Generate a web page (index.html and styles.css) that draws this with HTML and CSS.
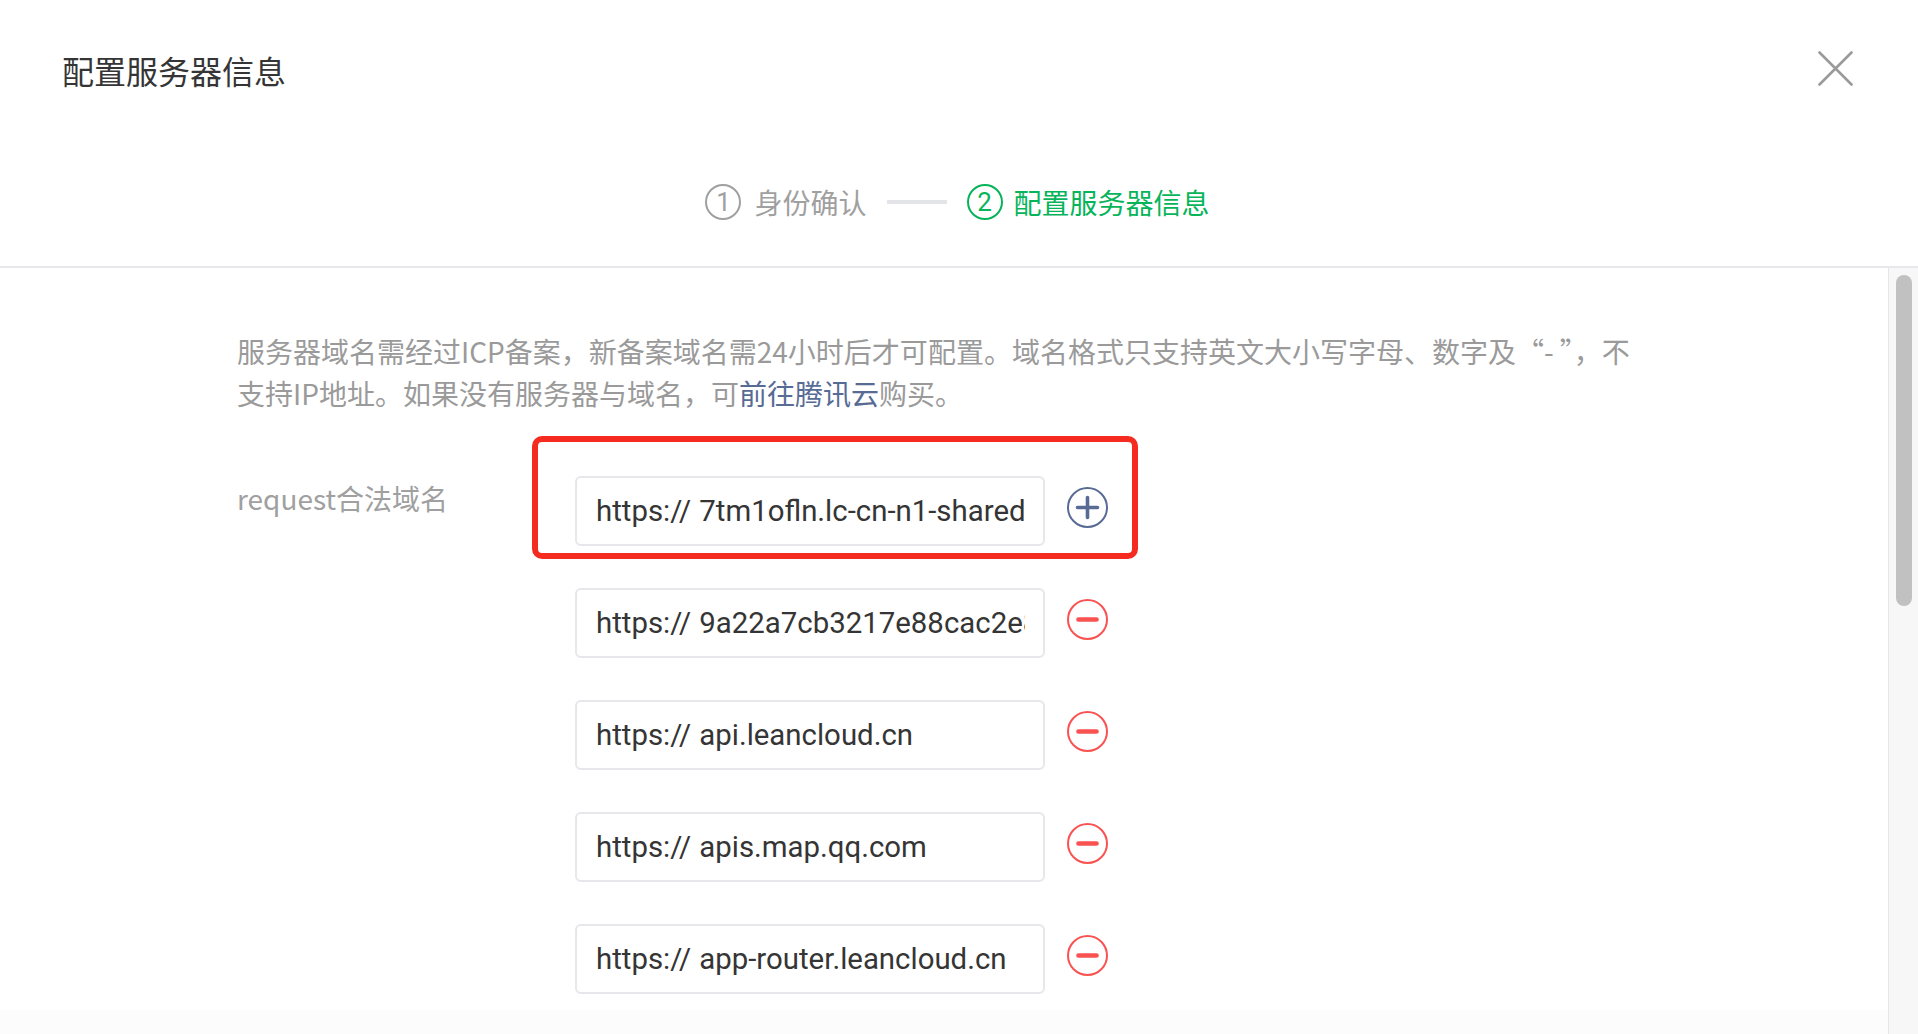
FILE: index.html
```html
<!DOCTYPE html>
<html lang="zh-CN">
<head>
<meta charset="utf-8">
<title>配置服务器信息</title>
<link rel="stylesheet" href="styles.css">
</head>
<body>
<div class="dialog">
  <header class="dialog-head">
    <div class="title-row">
      <h1 class="title">配置服务器信息</h1>
      <button class="close" aria-label="关闭">
        <svg width="35" height="35" viewBox="0 0 35 35"><path d="M1.5 1.5 L33.5 33.5 M33.5 1.5 L1.5 33.5" stroke="#9a9a9a" stroke-width="2.6" stroke-linecap="round" fill="none"/></svg>
      </button>
    </div>
    <div class="steps">
      <div class="step done"><span class="num">1</span><span class="step-text">身份确认</span></div>
      <span class="step-line"></span>
      <div class="step current"><span class="num">2</span><span class="step-text">配置服务器信息</span></div>
    </div>
  </header>
  <div class="dialog-body">
    <div class="content">
      <p class="desc">服务器域名需经过ICP备案，新备案域名需24小时后才可配置。域名格式只支持英文大小写字母、数字及“- ”，不支持IP地址。如果没有服务器与域名，可<a class="link" href="#">前往腾讯云</a>购买。</p>
      <div class="form-row">
        <label class="label">request合法域名</label>
        <div class="fields">
          <div class="field-row first">
            <div class="field"><span class="prefix">https://</span><input class="input" type="text" value="7tm1ofln.lc-cn-n1-shared.com" readonly></div>
            <span class="icon add">
              <svg width="41" height="41" viewBox="0 0 41 41"><circle cx="20.5" cy="20.5" r="19.5" fill="none" stroke="#576b95" stroke-width="2"/><path d="M20.5 10.5 V30.5 M10.5 20.5 H30.5" stroke="#576b95" stroke-width="3.6" stroke-linecap="round"/></svg>
            </span>
            <div class="annot"></div>
          </div>
          <div class="field-row">
            <div class="field"><span class="prefix">https://</span><input class="input" type="text" value="9a22a7cb3217e88cac2e8f0b.lc-cn-n1-shared.com" readonly></div>
            <span class="icon remove">
              <svg width="41" height="41" viewBox="0 0 41 41"><circle cx="20.5" cy="20.5" r="19.5" fill="none" stroke="#fa5151" stroke-width="2"/><path d="M11.5 20.5 H29.5" stroke="#fa5151" stroke-width="4.6" stroke-linecap="round"/></svg>
            </span>
          </div>
          <div class="field-row">
            <div class="field"><span class="prefix">https://</span><input class="input" type="text" value="api.leancloud.cn" readonly></div>
            <span class="icon remove">
              <svg width="41" height="41" viewBox="0 0 41 41"><circle cx="20.5" cy="20.5" r="19.5" fill="none" stroke="#fa5151" stroke-width="2"/><path d="M11.5 20.5 H29.5" stroke="#fa5151" stroke-width="4.6" stroke-linecap="round"/></svg>
            </span>
          </div>
          <div class="field-row">
            <div class="field"><span class="prefix">https://</span><input class="input" type="text" value="apis.map.qq.com" readonly></div>
            <span class="icon remove">
              <svg width="41" height="41" viewBox="0 0 41 41"><circle cx="20.5" cy="20.5" r="19.5" fill="none" stroke="#fa5151" stroke-width="2"/><path d="M11.5 20.5 H29.5" stroke="#fa5151" stroke-width="4.6" stroke-linecap="round"/></svg>
            </span>
          </div>
          <div class="field-row">
            <div class="field"><span class="prefix">https://</span><input class="input" type="text" value="app-router.leancloud.cn" readonly></div>
            <span class="icon remove">
              <svg width="41" height="41" viewBox="0 0 41 41"><circle cx="20.5" cy="20.5" r="19.5" fill="none" stroke="#fa5151" stroke-width="2"/><path d="M11.5 20.5 H29.5" stroke="#fa5151" stroke-width="4.6" stroke-linecap="round"/></svg>
            </span>
          </div>
        </div>
      </div>
    </div>
    <div class="fade"></div>
    <div class="scrollbar"><div class="thumb"></div></div>
  </div>
</div>
</body>
</html>
```

FILE: styles.css
```css
* { box-sizing: border-box; }
html, body { margin: 0; padding: 0; background: #fff; }
body {
  font-family: "Noto Sans CJK SC", "Noto Sans", sans-serif;
  color: #353535;
  overflow: hidden;
}
.dialog {
  width: 1918px;
  height: 1034px;
  display: flex;
  flex-direction: column;
  position: relative;
}
.dialog-head {
  padding: 50px 65px 46px 62px;
  border-bottom: 2px solid #e7e8eb;
  flex: none;
}
.title-row {
  display: flex;
  align-items: center;
  justify-content: space-between;
  height: 40px;
}
.title {
  margin: 0;
  font-size: 32px;
  line-height: 40px;
  font-weight: 400;
  color: #353535;
}
.close {
  border: 0;
  background: none;
  padding: 0;
  width: 35px;
  height: 35px;
  display: block;
  margin-top: -4px;
}
.close svg { display: block; }
.steps {
  margin-top: 94px;
  display: flex;
  align-items: center;
  justify-content: center;
  height: 36px;
  margin-left: -62px;
  margin-right: -65px;
  padding-right: 3px;
}
.step {
  display: flex;
  align-items: center;
}
.step.done { gap: 13px; }
.step.current { gap: 11px; }
.num {
  width: 36px;
  height: 36px;
  border-radius: 50%;
  border: 2px solid currentColor;
  display: flex;
  align-items: center;
  justify-content: center;
  font-family: "Roboto", "Noto Sans", sans-serif;
  font-size: 26px;
  line-height: 1;
}
.step-text {
  font-size: 28px;
  line-height: 36px;
}
.step.done { color: #a0a0a0; }
.step.current { color: #07b45a; }
.step-line {
  width: 60px;
  height: 4px;
  background: #e3e5e8;
  margin: 0 20px;
}
.dialog-body {
  flex: 1;
  overflow: hidden;
  position: relative;
}
.content {
  padding: 62px 0 0 237px;
}
.desc {
  margin: 0;
  width: 1395px;
  font-size: 28px;
  line-height: 42px;
  color: #9a9a9a;
}
.link { color: #576b95; text-decoration: none; }
.form-row {
  margin-top: 62px;
  display: flex;
  align-items: flex-start;
}
.label {
  width: 338px;
  flex: none;
  margin-top: 1px;
  font-size: 28px;
  line-height: 42px;
  color: #a0a0a0;
}
.fields {
  display: flex;
  flex-direction: column;
  gap: 42px;
}
.field-row {
  display: flex;
  align-items: center;
  gap: 22px;
  position: relative;
}
.field {
  width: 470px;
  height: 70px;
  border: 2px solid #e6e6eb;
  border-radius: 6px;
  display: flex;
  align-items: center;
  padding: 0 18px 0 19px;
  font-family: "Roboto", "Noto Sans", sans-serif;
  font-size: 29.4px;
  color: #353535;
  background: #fff;
}
.prefix { flex: none; margin-right: 8px; }
.input {
  flex: 1;
  min-width: 0;
  border: 0;
  outline: none;
  padding: 0;
  font: inherit;
  color: inherit;
  background: transparent;
}
.icon {
  display: block;
  width: 41px;
  height: 41px;
  margin-bottom: 8px;
}
.icon svg { display: block; }
.annot {
  position: absolute;
  left: -43px;
  top: -40px;
  width: 606px;
  height: 123px;
  border: 6px solid #f52b20;
  border-radius: 10px;
  pointer-events: none;
}
.fade {
  position: absolute;
  left: 0;
  right: 30px;
  bottom: 0;
  height: 24px;
  background: #fcfcfc;
}
.scrollbar {
  position: absolute;
  top: 0;
  right: 0;
  bottom: 0;
  width: 30px;
  background: #f7f7f7;
  border-left: 1px solid #e6e6e6;
}
.thumb {
  position: absolute;
  top: 7px;
  left: 7px;
  width: 16px;
  height: 331px;
  border-radius: 8px;
  background: #c1c1c1;
}
```
